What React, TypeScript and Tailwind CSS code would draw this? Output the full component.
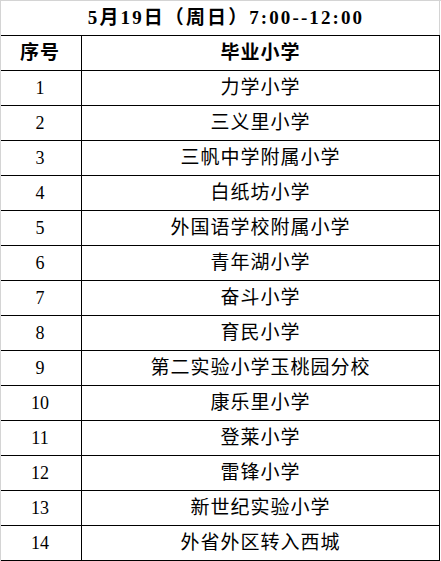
import React from "react";

const rows = [
  "力学小学",
  "三义里小学",
  "三帆中学附属小学",
  "白纸坊小学",
  "外国语学校附属小学",
  "青年湖小学",
  "奋斗小学",
  "育民小学",
  "第二实验小学玉桃园分校",
  "康乐里小学",
  "登莱小学",
  "雷锋小学",
  "新世纪实验小学",
  "外省外区转入西城",
];

const font = { fontFamily: '"Liberation Serif", "Noto Sans CJK SC", serif' };

export default function App() {
  return (
    <div
      className="w-[441px] h-[561px] bg-white border-l border-t border-[#d4d4d4] flex flex-col text-black"
      style={font}
    >
      <div className="w-[439px] h-[34px] border-r border-[#d4d4d4] flex items-center justify-center font-bold text-[19px] tracking-[2.1px] pl-[12px]">
        5月19日（周日）7:00--12:00
      </div>
      <div className="w-[439px] flex flex-col border-t border-r border-black">
        <div className="flex h-[35px] border-b border-black">
          <div className="w-[81px] border-r border-black flex items-center justify-center font-bold text-[19px] tracking-[1px] pr-[2px]">
            序号
          </div>
          <div className="flex-1 flex items-center justify-center font-bold text-[19px] tracking-[1px]">
            毕业小学
          </div>
        </div>
        {rows.map((name, i) => (
          <div key={i} className="flex h-[35px] border-b border-black">
            <div className="w-[81px] border-r border-black flex items-center justify-center text-[18px] pr-[2px]">
              {i + 1}
            </div>
            <div className="flex-1 flex items-center justify-center text-[19px] tracking-[1px]">
              {name}
            </div>
          </div>
        ))}
      </div>
    </div>
  );
}
